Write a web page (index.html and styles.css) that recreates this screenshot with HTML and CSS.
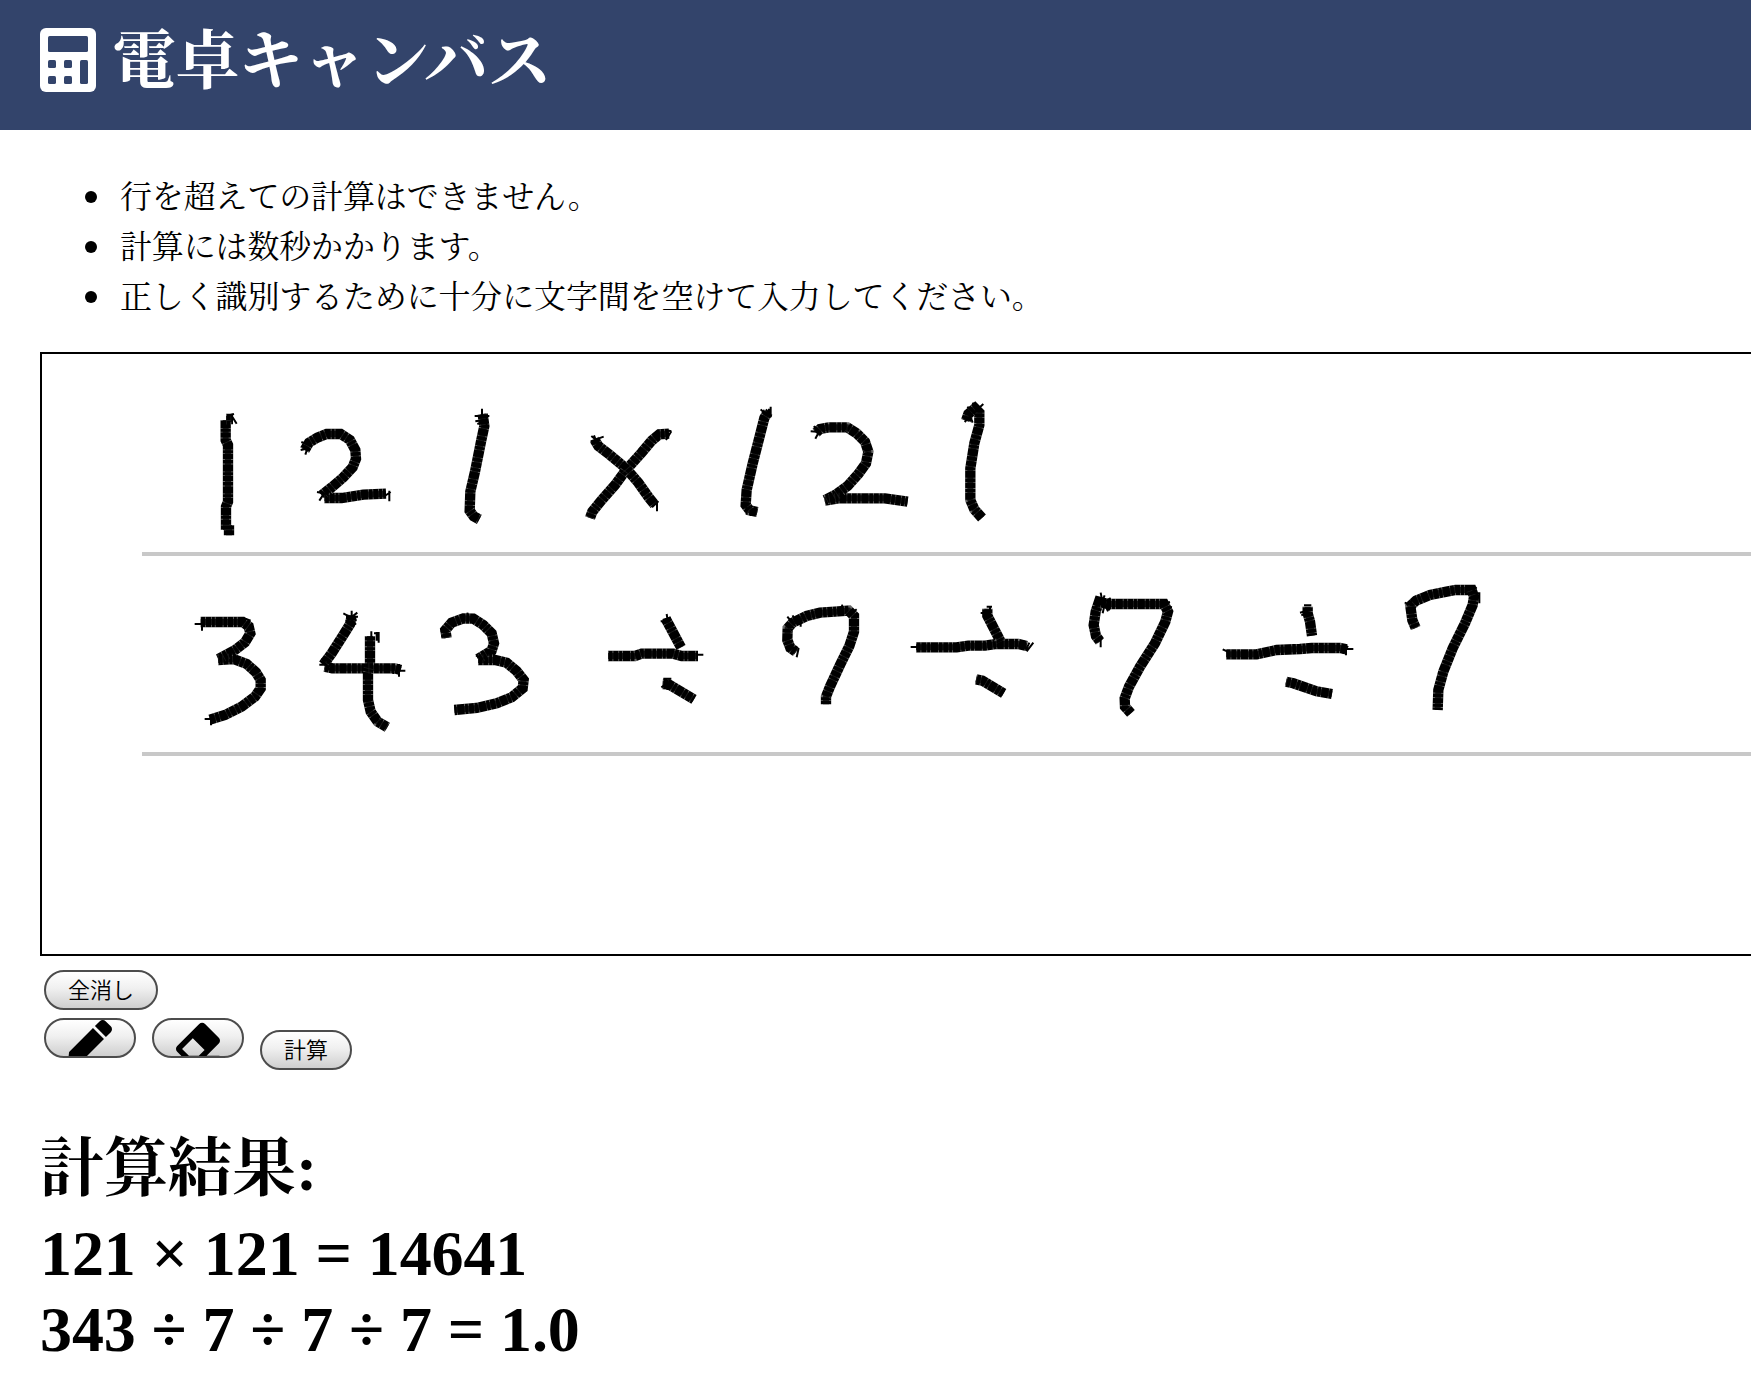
FILE: index.html
```html
<!DOCTYPE html>
<html lang="ja">
<head>
<meta charset="utf-8">
<title>電卓キャンバス</title>
<link rel="stylesheet" href="styles.css">
</head>
<body>
<header class="site-header">
  <svg class="logo" viewBox="0 0 448 512" aria-hidden="true">
    <rect class="logo-body" width="448" height="512" rx="48"/>
    <rect x="64" y="64" width="320" height="128" rx="13"/>
    <rect x="64" y="256" width="64" height="64" rx="13"/>
    <rect x="192" y="256" width="64" height="64" rx="13"/>
    <rect x="64" y="384" width="64" height="64" rx="13"/>
    <rect x="192" y="384" width="64" height="64" rx="13"/>
    <rect x="320" y="256" width="64" height="192" rx="13"/>
  </svg>
  <h1 class="title">電卓キャンバス</h1>
</header>
<main class="content">
  <ul class="notes">
    <li>行を超えての計算はできません。</li>
    <li>計算には数秒かかります。</li>
    <li>正しく識別するために十分に文字間を空けて入力してください。</li>
  </ul>
  <div class="board">
    <svg class="drawing">
      <defs>
        <g id="ink">
          <g transform="translate(88 36) scale(.33333)">
            <path d="M288 420V350L294 335V165L287 150V90M297 405V436M288 87H309"/>
            <path d="M524 180L537 158L562 143L590 132H632L660 150L676 180L678 206L668 232L640 262L605 292L575 316M583 324H635L700 314L768 311"/>
            <path d="M1058 72L1063 108L1053 155L1035 245L1021 305L1019 362L1031 379L1048 388"/>
          </g>
          <g transform="translate(518 36) scale(.33333)">
            <path d="M103 148L115 168L150 195L198 235L235 278L266 322L284 344M90 384L97 365L125 330L165 285L198 240L245 188L275 152L298 133L327 131"/>
            <path d="M624 66L613 84L600 135L577 225L560 300L557 345L569 361L592 366"/>
            <path d="M768 128L780 117L806 112H862L890 130L915 155L925 185L918 220L895 252L863 288L830 312L795 330M794 332L835 325H975L1043 335"/>
            <path d="M1218 92L1225 72L1245 55L1258 68V105L1243 160L1231 235V330L1243 358L1266 384"/>
          </g>
          <g transform="translate(88 216) scale(.33333)">
            <path d="M212 156H338L356 169L361 190L345 217L315 240L265 267M264 270L310 267L350 282L378 307L392 330V355L375 380L335 410L285 435L240 449"/>
            <path d="M665 136L660 163L640 195L605 250L580 284M584 290L607 295H795L812 300M720 198V285L714 310V390L722 425L743 455L772 472"/>
            <path d="M950 204L946 180L965 158L1000 145L1030 146L1060 165L1085 190L1092 220L1085 242L1044 267M1044 270H1095L1130 278L1160 303L1181 330L1178 355L1145 382L1100 400L1040 414L973 420"/>
          </g>
          <g transform="translate(538 216) scale(.33333)">
            <path d="M84 258H165L185 251H280L305 258H354M257 146L270 170L303 232M248 342L266 343L342 388"/>
            <path d="M648 246L631 233L622 210L623 175L638 158L680 138L720 128L765 125L806 122L822 138V185L808 228L780 285L750 350L738 380V403"/>
            <path d="M1008 232H1130L1165 227H1215L1250 222H1315L1340 228M1222 116L1222 137L1240 172L1262 215M1188 328L1207 332L1271 370"/>
          </g>
          <g transform="translate(1008 216) scale(.33333)">
            <path d="M150 214L138 198L131 165L137 125L147 95L175 102H342L354 125L346 155L315 220L270 290L237 350L224 385L225 410L243 430"/>
            <path d="M528 253H620L680 240L750 237L785 234H870L890 238M708 335L730 340L800 364L846 372"/>
            <path d="M773 110V130L780 155L786 197"/>
            <path d="M1097 174L1087 150L1081 108L1098 92L1140 75L1190 65L1217 60H1265L1272 80L1268 105L1245 160L1208 235L1180 305L1165 360L1163 420"/>
          </g>
        </g>
      </defs>
      <path class="rule" d="M100 200H1800M100 400H1800"/>
      <use href="#ink" class="ink"/>
      <use href="#ink" class="ink-gaps"/>
      <use href="#ink" class="ink-core"/>
      <g class="burrs">
        <path transform="translate(88 36) scale(.33333)" d="M304 76L320 101M298 76L312 72M514 156L534 164M512 180L530 176M526 194L532 176M561 306L590 312M568 332L584 308M778 302V334M764 318L782 306M1056 56V80M1034 78H1078M1036 94L1062 90M1042 102L1064 94M1070 74V110"/>
        <path transform="translate(518 36) scale(.33333)" d="M94 138L120 160M92 154L131 140M102 136L112 162M291 332V364M276 352L295 334M316 120L334 124M318 150L334 124M602 58L620 76M632 50V82M627 56V82M618 58L634 80M560 350V374M572 360V378M752 124L780 126M762 108L774 128M766 146L780 120M1212 68L1240 74M1222 50L1246 72M1238 38L1252 66M1270 42L1244 66M1214 96L1232 76M1238 98L1230 76"/>
        <path transform="translate(88 216) scale(.33333)" d="M194 162H216M216 142V182M224 447H246M243 434V466M665 122V148M640 130L680 152M684 140H648M648 154L682 128M678 164L654 138M568 284H592M574 266L600 300M588 304L604 278M724 184V210M732 190H748M740 186V212M746 186V218M790 284V312M807 282V320M800 302H826M932 182L952 190M934 200L958 192M1012 128L1016 150M1038 256L1060 268M346 146L362 152"/>
        <path transform="translate(538 216) scale(.33333)" d="M352 254H370M242 154L270 152M260 132L264 158M248 150L272 142M244 352L262 340M262 330V360M250 326H274M622 140L640 162M638 136L648 162M662 144V170M650 262L656 234M618 242L652 230M830 118L812 132M786 104L790 128M992 231H1012M1202 129H1228M1220 110H1236M1230 110V134M1360 218L1340 244M1330 212L1340 242M1348 218L1338 240"/>
        <path transform="translate(1008 216) scale(.33333)" d="M152 68L158 100M164 76L152 104M136 92L180 120M134 112L182 84M158 130L166 94M174 124L160 94M152 202V232M136 218L158 204M346 100L360 96M354 110L366 112M518 238L536 246M888 222V256M878 250L894 228M890 237H910M750 128L778 120M754 136L776 126M762 106H784M1064 98L1090 106M1070 106L1098 78M1268 62L1280 52M1276 70H1288V100"/>
      </g>
    </svg>
  </div>
  <div class="tools">
    <button class="btn" type="button">全消し</button>
  </div>
  <div class="tools tools-second">
    <button class="btn btn-icon" type="button" aria-label="ペン">
      <svg class="icon" viewBox="0 0 512 512"><path d="M290.74 93.24l128.02 128.02-277.99 277.99-114.14 12.6C11.35 513.54-1.56 500.62.14 485.34l12.7-114.22 277.9-277.88zm207.2-19.06l-60.11-60.11c-18.75-18.75-49.16-18.75-67.91 0l-56.55 56.55 128.02 128.02 56.55-56.55c18.75-18.76 18.75-49.16 0-67.91z"/></svg>
    </button>
    <button class="btn btn-icon" type="button" aria-label="消しゴム">
      <svg class="icon" viewBox="0 0 512 512"><path d="M497.941 273.941c18.745-18.745 18.745-49.137 0-67.882l-160-160c-18.745-18.745-49.136-18.746-67.883 0l-256 256c-18.745 18.745-18.745 49.137 0 67.882l96 96A48.004 48.004 0 0 0 144 480h356c6.627 0 12-5.373 12-12v-40c0-6.627-5.373-12-12-12H355.883l142.058-142.059zm-302.627-62.627l137.373 137.373L265.373 416H150.628l-80-80 124.686-124.686z"/></svg>
    </button>
    <button class="btn btn-run" type="button">計算</button>
  </div>
  <section class="result">
    <h2 class="result-title">計算結果:</h2>
    <p class="result-line">121 × 121 = 14641</p>
    <p class="result-line">343 ÷ 7 ÷ 7 ÷ 7 = 1.0</p>
  </section>
</main>
</body>
</html>
```

FILE: styles.css
```css
* { box-sizing: border-box; }

body {
  margin: 0;
  background: #fff;
  color: #000;
  font-family: "Liberation Serif", "Noto Serif CJK JP", "Noto Sans CJK JP", serif;
}

.site-header {
  display: flex;
  align-items: flex-start;
  gap: 16px;
  height: 130px;
  padding: 28px 40px 0;
  background: #33446b;
  color: #fff;
}

.logo {
  flex: none;
  width: 56px;
  height: 64px;
  fill: #33446b;
}

.logo-body { fill: #fff; }

.title {
  margin: 0;
  padding-top: 2px;
  font-size: 64px;
  line-height: 64px;
  font-weight: 700;
  letter-spacing: -.6px;
}

.content { padding: 42px 0 0 40px; }

.notes {
  margin: 0 0 30px;
  padding-left: 45px;
  list-style: none;
  font-size: 32px;
  line-height: 50px;
  letter-spacing: -.15px;
}

.notes li {
  display: flex;
  align-items: center;
  gap: 23px;
}

.notes li::before {
  content: "";
  width: 12px;
  height: 12px;
  border-radius: 50%;
  background: #000;
}

.board {
  height: 604px;
  border: 2px solid #000;
  border-right: 0;
}

.drawing {
  display: block;
  width: 100%;
  height: 600px;
}

.rule {
  stroke: #c8c8c8;
  stroke-width: 4;
}

.ink {
  fill: none;
  stroke: #000;
  stroke-width: 31px;
}

.ink-gaps {
  fill: none;
  stroke: rgba(255, 255, 255, .4);
  stroke-width: 33px;
  stroke-dasharray: 2.5 11 2.5 15 2.5 9 2.5 21;
}

.ink-core {
  fill: none;
  stroke: rgba(0, 0, 0, .75);
  stroke-width: 18px;
}

.burrs {
  fill: none;
  stroke: #000;
  stroke-width: 6;
}

.tools {
  display: flex;
  align-items: flex-start;
  gap: 16px;
  padding: 14px 0 0 4px;
}

.tools-second { padding-top: 8px; }

.btn {
  height: 40px;
  padding: 0 22px 4px;
  overflow: hidden;
  border: 2px solid #4c4c4c;
  border-radius: 20px;
  background: linear-gradient(#fff, #f0f0f0 45%, #cfcfcf);
  color: #000;
  font: 350 22px/32px "Noto Sans CJK JP", sans-serif;
}

.btn-icon {
  display: flex;
  align-items: flex-start;
  padding-bottom: 0;
}

.icon {
  flex: none;
  width: 44px;
  height: 44px;
}

.btn-run { margin-top: 12px; }

.result {
  padding-top: 61px;
  font-size: 64px;
  line-height: 76px;
  font-weight: 700;
}

.result-title,
.result-line {
  margin: 0;
  font: inherit;
}

.result-title { height: 85px; }

.result-line { letter-spacing: -.1px; }
```
